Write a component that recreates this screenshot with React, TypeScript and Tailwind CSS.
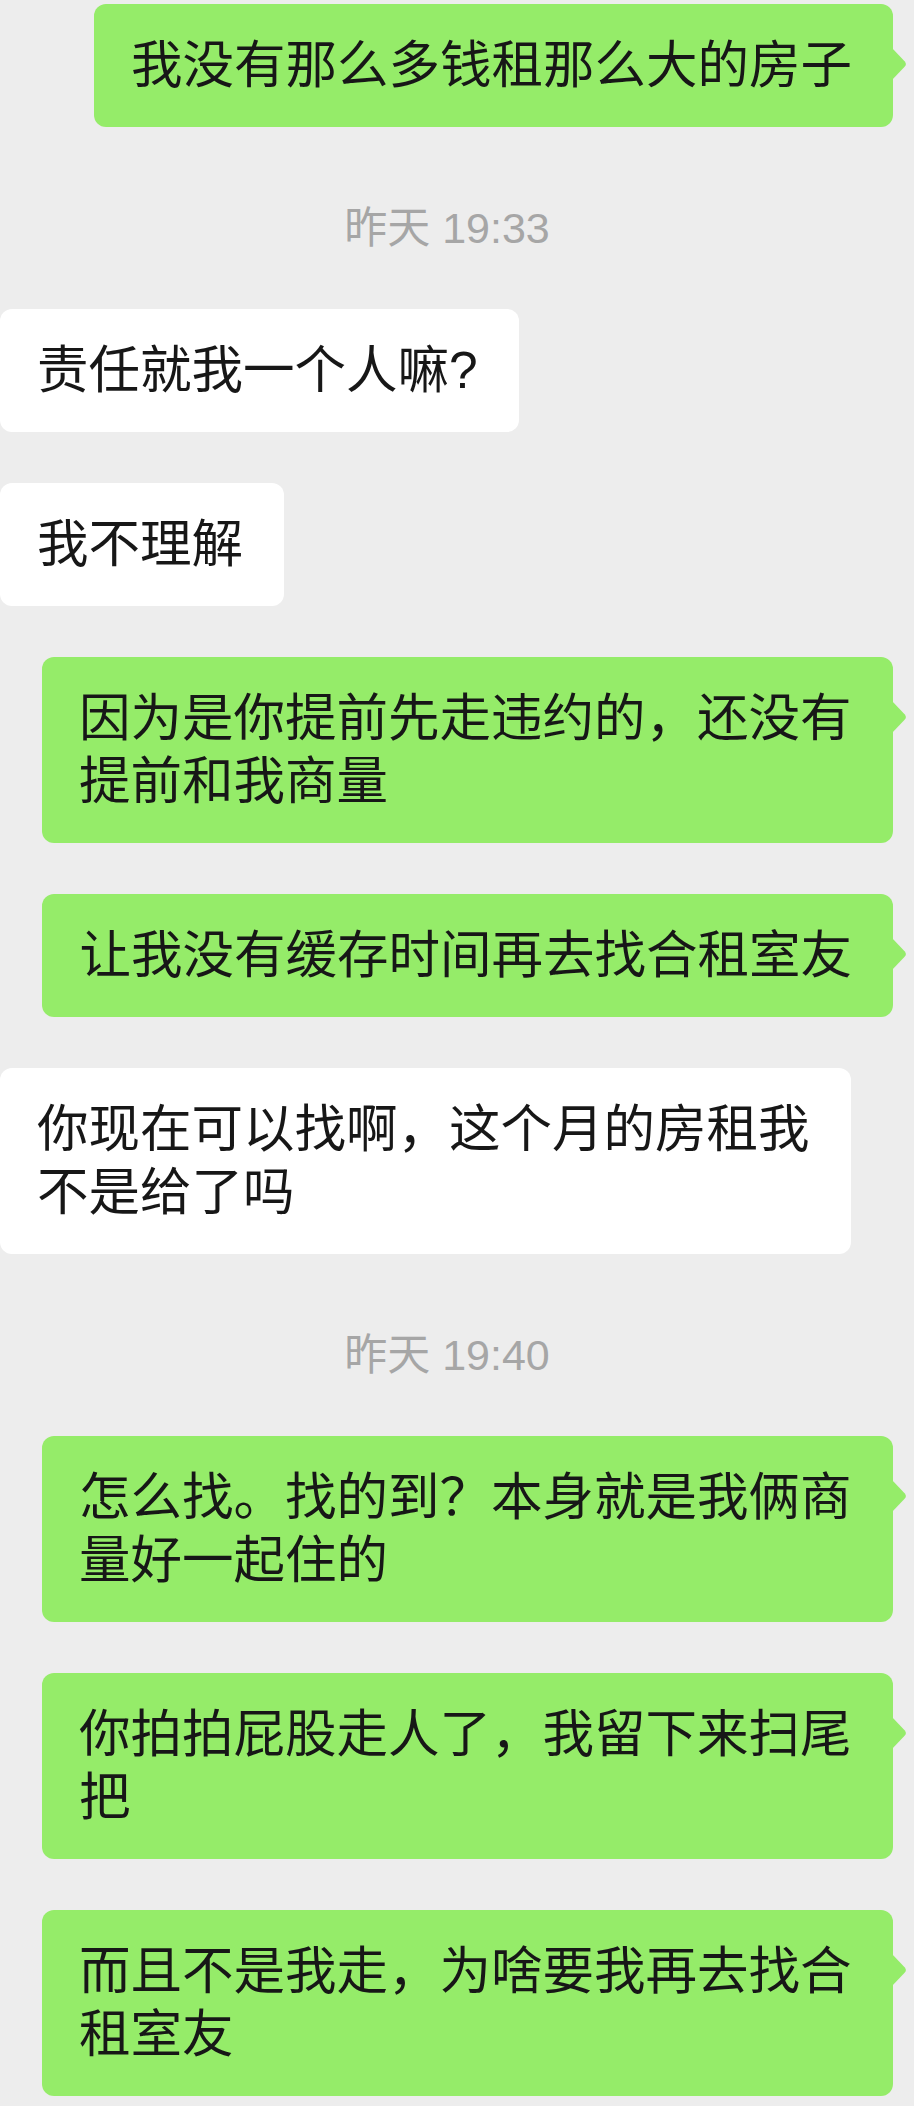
type Item =
  | { kind: 'time'; text: string }
  | { kind: 'msg'; side: 'me' | 'them'; text: string };

const items: Item[] = [
  { kind: 'msg', side: 'me', text: '我没有那么多钱租那么大的房子' },
  { kind: 'time', text: '昨天 19:33' },
  { kind: 'msg', side: 'them', text: '责任就我一个人嘛?' },
  { kind: 'msg', side: 'them', text: '我不理解' },
  { kind: 'msg', side: 'me', text: '因为是你提前先走违约的，还没有提前和我商量' },
  { kind: 'msg', side: 'me', text: '让我没有缓存时间再去找合租室友' },
  { kind: 'msg', side: 'them', text: '你现在可以找啊，这个月的房租我不是给了吗' },
  { kind: 'time', text: '昨天 19:40' },
  { kind: 'msg', side: 'me', text: '怎么找。找的到？本身就是我俩商量好一起住的' },
  { kind: 'msg', side: 'me', text: '你拍拍屁股走人了，我留下来扫尾把' },
  { kind: 'msg', side: 'me', text: '而且不是我走，为啥要我再去找合租室友' },
];

function Tail() {
  return (
    <svg
      className="absolute -right-[15px] top-[44px]"
      width="16"
      height="32"
      viewBox="0 0 16 32"
    >
      <path d="M0 0 L12.6 13.2 Q15.2 16 12.6 18.8 L0 32 Z" fill="#95ec69" />
    </svg>
  );
}

function Bubble({ side, text }: { side: 'me' | 'them'; text: string }) {
  const mine = side === 'me';
  return (
    <div className={`flex ${mine ? 'justify-end pr-[21px]' : 'justify-start'}`}>
      <div
        className={`relative max-w-[851px] rounded-[12px] pl-[37px] pr-[41px] py-[30px] text-[51.5px] leading-[63px] text-[#171717] ${
          mine ? 'bg-[#95ec69]' : 'bg-white'
        }`}
      >
        {text}
        {mine && <Tail />}
      </div>
    </div>
  );
}

export default function App() {
  return (
    <div className="min-h-screen bg-[#ededed] pt-[4px] pb-[9px] font-['Liberation_Sans','Noto_Sans_CJK_SC',sans-serif]">
      <div className="flex flex-col gap-[51px]">
        {items.map((item, i) =>
          item.kind === 'time' ? (
            <div
              key={i}
              className="mt-[22px] mb-[2px] h-[56px] pr-[20px] text-center text-[43px] leading-[56px] text-[#a6a6a6]"
            >
              {item.text}
            </div>
          ) : (
            <Bubble key={i} side={item.side} text={item.text} />
          )
        )}
      </div>
    </div>
  );
}
